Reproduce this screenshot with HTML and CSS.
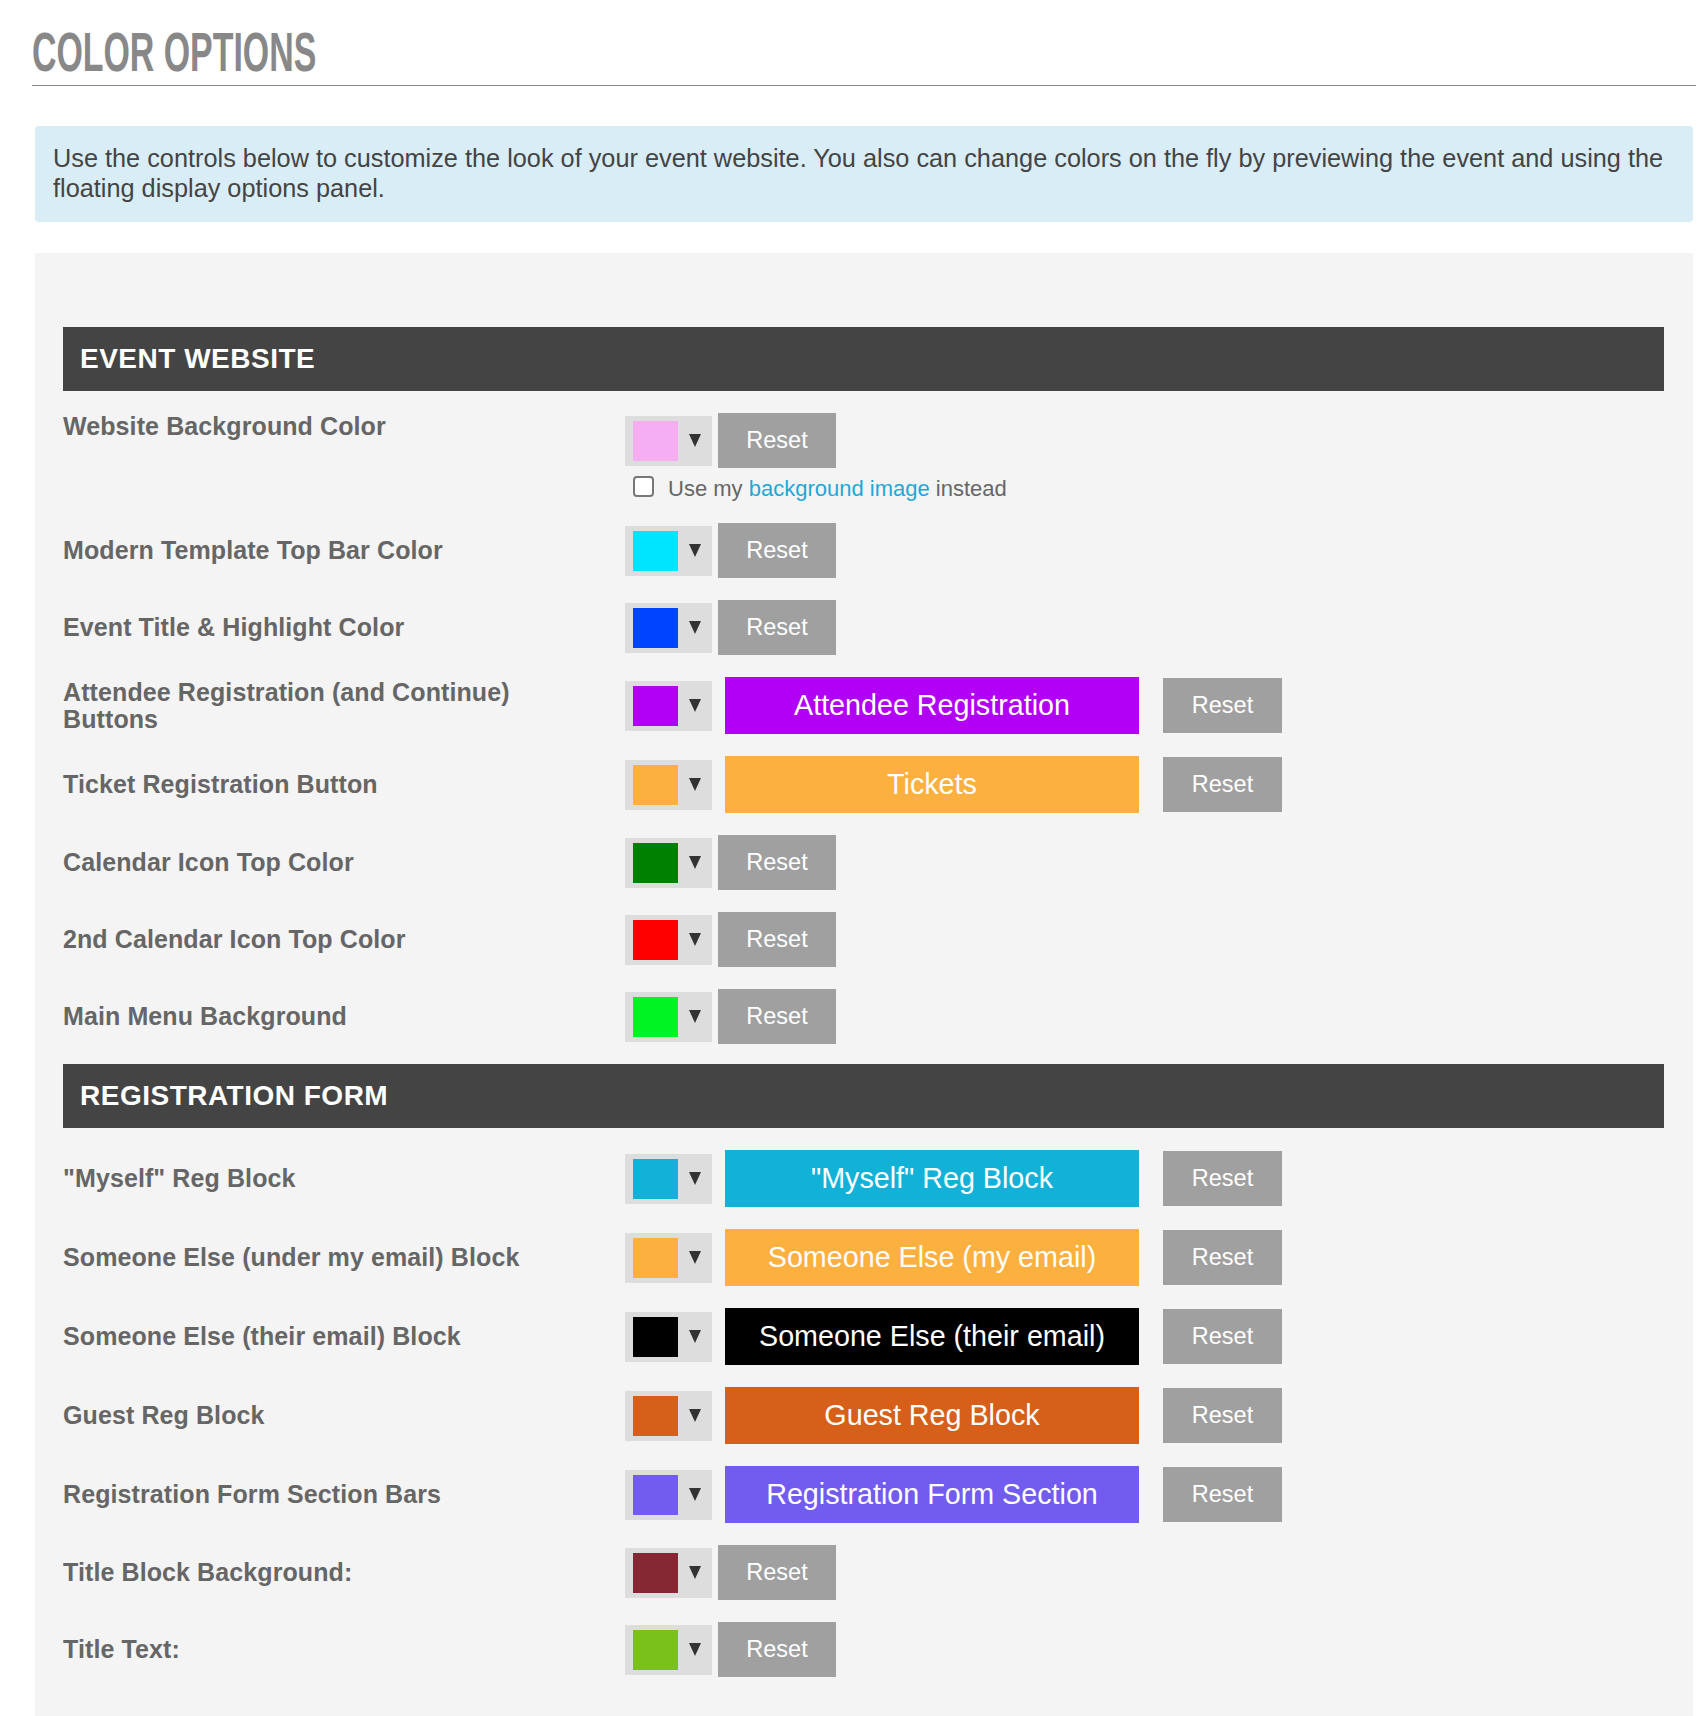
FILE: index.html
```html
<!DOCTYPE html>
<html lang="en">
<head>
  <meta charset="UTF-8">
  <title>Color Options</title>
  <link rel="stylesheet" href="styles.css">
</head>
<body>

<div class="page">
  <h1 class="page-title"><span>COLOR OPTIONS</span></h1>

  <div class="intro">
    Use the controls below to customize the look of your event website. You also can change colors on the fly by previewing the event and using the floating display options panel.
  </div>

  <div class="options">
    <section class="opt-group">
      <div class="section-head">EVENT WEBSITE</div>

      <div class="opt-row top">
        <div class="opt-label">Website Background Color</div>
        <div class="opt-controls">
          <div class="opt-line">
            <div class="picker"><span class="swatch" style="background: #f5aef1;"></span><span class="caret"></span></div>
            <button class="reset">Reset</button>
          </div>
          <label class="bg-check"><input type="checkbox"> Use my&nbsp;<a href="#">background image</a>&nbsp;instead</label>
        </div>
      </div>

      <div class="opt-row">
        <div class="opt-label">Modern Template Top Bar Color</div>
        <div class="opt-line">
          <div class="picker"><span class="swatch" style="background: #00e5ff;"></span><span class="caret"></span></div>
          <button class="reset">Reset</button>
        </div>
      </div>

      <div class="opt-row">
        <div class="opt-label">Event Title &amp; Highlight Color</div>
        <div class="opt-line">
          <div class="picker"><span class="swatch" style="background: #0044ff;"></span><span class="caret"></span></div>
          <button class="reset">Reset</button>
        </div>
      </div>

      <div class="opt-row">
        <div class="opt-label">Attendee Registration (and Continue) Buttons</div>
        <div class="opt-line">
          <div class="picker"><span class="swatch" style="background: #b100f5;"></span><span class="caret"></span></div>
          <div class="preview" style="background: #b100f5;">Attendee Registration</div>
          <button class="reset wide">Reset</button>
        </div>
      </div>

      <div class="opt-row">
        <div class="opt-label">Ticket Registration Button</div>
        <div class="opt-line">
          <div class="picker"><span class="swatch" style="background: #fbb040;"></span><span class="caret"></span></div>
          <div class="preview" style="background: #fbb040;">Tickets</div>
          <button class="reset wide">Reset</button>
        </div>
      </div>

      <div class="opt-row">
        <div class="opt-label">Calendar Icon Top Color</div>
        <div class="opt-line">
          <div class="picker"><span class="swatch" style="background: #008000;"></span><span class="caret"></span></div>
          <button class="reset">Reset</button>
        </div>
      </div>

      <div class="opt-row">
        <div class="opt-label">2nd Calendar Icon Top Color</div>
        <div class="opt-line">
          <div class="picker"><span class="swatch" style="background: #ff0000;"></span><span class="caret"></span></div>
          <button class="reset">Reset</button>
        </div>
      </div>

      <div class="opt-row">
        <div class="opt-label">Main Menu Background</div>
        <div class="opt-line">
          <div class="picker"><span class="swatch" style="background: #00f424;"></span><span class="caret"></span></div>
          <button class="reset">Reset</button>
        </div>
      </div>
    </section>

    <section class="opt-group">
      <div class="section-head">REGISTRATION FORM</div>

      <div class="opt-row">
        <div class="opt-label">"Myself" Reg Block</div>
        <div class="opt-line">
          <div class="picker"><span class="swatch" style="background: #12b2d8;"></span><span class="caret"></span></div>
          <div class="preview" style="background: #12b2d8;">"Myself" Reg Block</div>
          <button class="reset wide">Reset</button>
        </div>
      </div>

      <div class="opt-row">
        <div class="opt-label">Someone Else (under my email) Block</div>
        <div class="opt-line">
          <div class="picker"><span class="swatch" style="background: #fbb040;"></span><span class="caret"></span></div>
          <div class="preview" style="background: #fbb040;">Someone Else (my email)</div>
          <button class="reset wide">Reset</button>
        </div>
      </div>

      <div class="opt-row">
        <div class="opt-label">Someone Else (their email) Block</div>
        <div class="opt-line">
          <div class="picker"><span class="swatch" style="background: #000000;"></span><span class="caret"></span></div>
          <div class="preview" style="background: #000000;">Someone Else (their email)</div>
          <button class="reset wide">Reset</button>
        </div>
      </div>

      <div class="opt-row">
        <div class="opt-label">Guest Reg Block</div>
        <div class="opt-line">
          <div class="picker"><span class="swatch" style="background: #d65f19;"></span><span class="caret"></span></div>
          <div class="preview" style="background: #d65f19;">Guest Reg Block</div>
          <button class="reset wide">Reset</button>
        </div>
      </div>

      <div class="opt-row">
        <div class="opt-label">Registration Form Section Bars</div>
        <div class="opt-line">
          <div class="picker"><span class="swatch" style="background: #725bef;"></span><span class="caret"></span></div>
          <div class="preview" style="background: #725bef;">Registration Form Section</div>
          <button class="reset wide">Reset</button>
        </div>
      </div>

      <div class="opt-row">
        <div class="opt-label">Title Block Background:</div>
        <div class="opt-line">
          <div class="picker"><span class="swatch" style="background: #862833;"></span><span class="caret"></span></div>
          <button class="reset">Reset</button>
        </div>
      </div>

      <div class="opt-row">
        <div class="opt-label">Title Text:</div>
        <div class="opt-line">
          <div class="picker"><span class="swatch" style="background: #7ac21b;"></span><span class="caret"></span></div>
          <button class="reset">Reset</button>
        </div>
      </div>
    </section>
  </div>
</div>

</body>
</html>
```

FILE: styles.css
```css
body {
  margin: 0;
  font-family: "Liberation Sans", Arial, sans-serif;
  background: #fff;
}

.page {
  padding: 0 8px 0 32px;
}

.page-title {
  margin: 24px 0 0;
  padding-bottom: 5px;
  border-bottom: 1px solid #888;
  font-size: 56px;
  line-height: 56px;
  font-weight: bold;
  color: #888;
}

.page-title span {
  display: inline-block;
  transform: scaleX(0.605);
  transform-origin: 0 50%;
}

.intro {
  margin: 40px 3px 0;
  padding: 17px 18px 19px;
  background: #d9edf7;
  border-radius: 4px;
  font-size: 25.3px;
  line-height: 30px;
  color: #444;
}

.options {
  margin: 31px 3px 0;
  padding: 74px 29px 40px 28px;
  background: #f4f4f4;
}

.section-head {
  height: 64px;
  margin-bottom: 22px;
  padding-left: 17px;
  background: #444;
  color: #fff;
  font-size: 28px;
  font-weight: bold;
  letter-spacing: 0.5px;
  line-height: 64px;
}

.opt-row {
  display: flex;
  align-items: center;
  margin-bottom: 22px;
}

.opt-group .opt-row:last-child {
  margin-bottom: 20px;
}

.opt-row.top {
  align-items: flex-start;
}

.opt-label {
  flex: 0 0 562px;
  box-sizing: border-box;
  padding-right: 60px;
  font-size: 25px;
  font-weight: bold;
  letter-spacing: 0.1px;
  line-height: 27px;
  color: #666;
}

.opt-line {
  display: flex;
  align-items: center;
}

.picker {
  display: flex;
  align-items: center;
  box-sizing: border-box;
  width: 87px;
  height: 50px;
  padding-left: 8px;
  background: #ddd;
}

.swatch {
  width: 45px;
  height: 40px;
}

.caret {
  width: 0;
  height: 0;
  margin-left: 11px;
  border-left: 6.5px solid transparent;
  border-right: 6.5px solid transparent;
  border-top: 13px solid #333;
}

.reset {
  width: 118px;
  height: 55px;
  margin-left: 6px;
  border: none;
  background: #a0a0a0;
  color: #fff;
  font-family: inherit;
  font-size: 23.5px;
  cursor: pointer;
}

.reset.wide {
  width: 119px;
  margin-left: 24px;
}

.preview {
  width: 414px;
  height: 57px;
  margin-left: 13px;
  color: #fff;
  font-size: 28.7px;
  line-height: 57px;
  text-align: center;
}

.bg-check {
  display: flex;
  align-items: center;
  height: 24px;
  margin-top: 9px;
  padding-left: 8px;
  font-size: 22px;
  color: #666;
}

.bg-check input {
  appearance: none;
  width: 21px;
  height: 21px;
  margin: -6px 14px 0 0;
  border: 2px solid #777;
  border-radius: 4px;
  background: #fff;
}

.bg-check a {
  color: #1fa8d6;
  text-decoration: none;
}
```
